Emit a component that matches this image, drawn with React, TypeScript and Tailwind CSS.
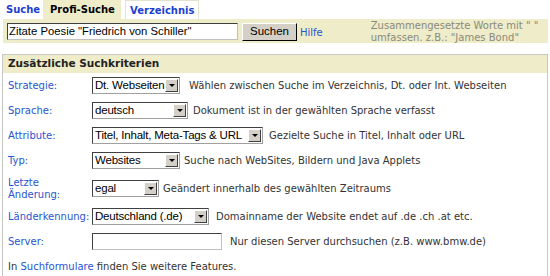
const rows = [
  { label: ["Strategie:"], value: "Dt. Webseiten", box: "w-[88px]", gap: "ml-[9px]", desc: "Wählen zwischen Suche im Verzeichnis, Dt. oder Int. Webseiten", h: "h-[25px]" },
  { label: ["Sprache:"], value: "deutsch", box: "w-[96px]", gap: "ml-[5px]", desc: "Dokument ist in der gewählten Sprache verfasst", h: "h-[25px]" },
  { label: ["Attribute:"], value: "Titel, Inhalt, Meta-Tags & URL", box: "w-[171px]", gap: "ml-[6px]", desc: "Gezielte Suche in Titel, Inhalt oder URL", h: "h-[25px]" },
  { label: ["Typ:"], value: "Websites", box: "w-[88px]", gap: "ml-[4px]", desc: "Suche nach WebSites, Bildern und Java Applets", h: "h-[25px]" },
  { label: ["Letzte", "Änderung:"], value: "egal", box: "w-[67px]", gap: "ml-[4px]", desc: "Geändert innerhalb des gewählten Zeitraums", h: "h-[31px]" },
  { label: ["Länderkennung:"], value: "Deutschland (.de)", box: "w-[117px]", gap: "ml-[7px]", desc: "Domainname der Website endet auf .de .ch .at etc.", h: "h-[25px]" },
];

function FakeSelect({ value, box }: { value: string; box: string }) {
  return (
    <div
      className={`${box} h-[17px] flex items-center bg-white border border-t-[#404040] border-l-[#404040] border-r-[#a0a0a0] border-b-[#a0a0a0] shrink-0`}
    >
      <span className="flex-1 pl-[2px] text-[11.5px] tracking-[-0.2px] leading-none text-black whitespace-nowrap overflow-hidden font-['Liberation_Sans',Arial,sans-serif]">
        {value}
      </span>
      <span className="w-[13px] h-[13px] mr-[1px] bg-[#d4d0c8] border border-t-white border-l-white border-r-[#404040] border-b-[#404040] flex items-center justify-center shrink-0">
        <span className="w-0 h-0 border-l-[3px] border-r-[3px] border-t-[3px] border-l-transparent border-r-transparent border-t-black" />
      </span>
    </div>
  );
}

export default function App() {
  return (
    <div className="w-[550px] h-[276px] bg-white overflow-hidden text-[#333] font-['DejaVu_Sans',Verdana,sans-serif]">
      {/* Tabs */}
      <div className="flex h-[19px] pl-[3px] text-[10px] font-bold">
        <div className="w-[41px] flex items-center pl-[3px] text-[#1d3fd0] border-r border-[#ecebe0]">Suche</div>
        <div className="w-[77px] flex items-center pl-[6px] bg-[#eeecc9] text-black">Profi-Suche</div>
        <div className="w-[74px] ml-[4px] flex items-center pl-[4px] text-[#1d3fd0] border border-b-0 border-[#e4e2d0]">Verzeichnis</div>
      </div>

      {/* Search band */}
      <div className="ml-[3px] w-[545px] h-[24px] bg-[#eeecc9] flex items-start">
        <div className="ml-[4px] mt-[4px] w-[231px] h-[17px] bg-white border border-t-[#404040] border-l-[#404040] border-r-[#c0c0c0] border-b-[#c0c0c0] flex items-center pl-[1px] text-[11.3px] text-black font-['Liberation_Sans',Arial,sans-serif] whitespace-nowrap">
          Zitate Poesie "Friedrich von Schiller"
        </div>
        <div className="ml-[4px] mt-[4px] w-[55px] h-[18px] bg-[#d4d0c8] border border-t-white border-l-white border-r-black border-b-black flex items-center justify-center text-[11.5px] text-black font-['Liberation_Sans',Arial,sans-serif]">
          Suchen
        </div>
        <div className="ml-[3px] mt-[6px] text-[10px] text-[#2855d0]">Hilfe</div>
        <div className="ml-[48px] mt-[1px] text-[10px] leading-[12px] text-[#8a8a7c]">
          <div>Zusammengesetzte Worte mit " "</div>
          <div>umfassen. z.B.: "James Bond"</div>
        </div>
      </div>

      {/* Criteria panel */}
      <div className="mt-[11px] ml-[2px] w-[546px] h-[230px] border border-[#c8c8c8]">
        <div className="h-[18px] bg-[#eeecc9] flex items-center pl-[5px] text-[10.5px] font-bold text-[#222]">
          Zusätzliche Suchkriterien
        </div>
        <div className="flex flex-col text-[10px]">
          {rows.map((r) => (
            <div key={r.value} className={`${r.h} flex items-center`}>
              <div className="w-[89px] pl-[5px] text-[#2855d0] leading-[12px] shrink-0">
                {r.label.map((l) => (
                  <div key={l}>{l}</div>
                ))}
              </div>
              <FakeSelect value={r.value} box={r.box} />
              <span className={`${r.gap} text-[#333] whitespace-nowrap`}>{r.desc}</span>
            </div>
          ))}
          <div className="h-[25px] flex items-center">
            <div className="w-[89px] pl-[5px] text-[#2855d0] shrink-0">Server:</div>
            <div className="w-[130px] h-[17px] bg-white border border-t-[#404040] border-l-[#404040] border-r-[#c0c0c0] border-b-[#c0c0c0] shrink-0" />
            <span className="ml-[8px] whitespace-nowrap">Nur diesen Server durchsuchen (z.B. www.bmw.de)</span>
          </div>
          <div className="h-[25px] flex items-center pl-[5px]">
            In&nbsp;<span className="text-[#2855d0]">Suchformulare</span>&nbsp;finden Sie weitere Features.
          </div>
        </div>
      </div>
    </div>
  );
}
